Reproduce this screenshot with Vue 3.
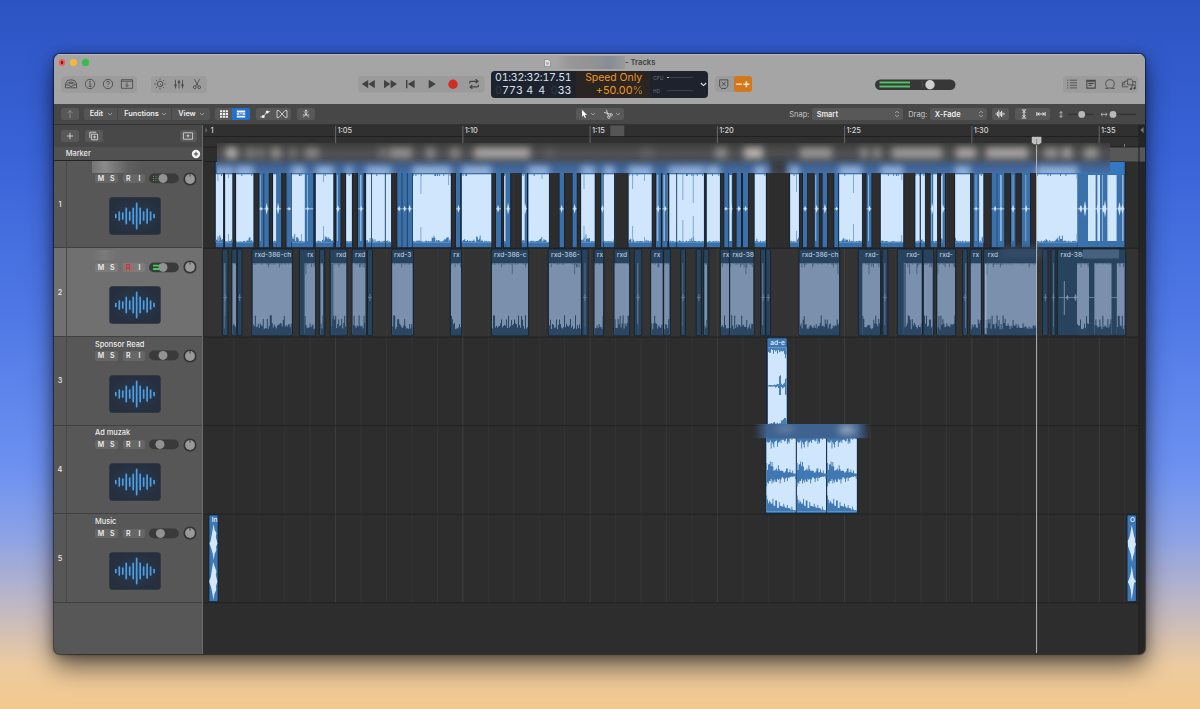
<script setup>
const rng = (seed) => {
  let s = Math.floor(seed * 7919) % 2147483647 || 1
  return () => ((s = (s * 16807) % 2147483647) / 2147483647)
}

// Jagged silhouette rising (dir -1) or hanging (dir 1) from a base line
const jag = (x, w, base, dir, env, seed, step = 1) => {
  const r = rng(seed + 3)
  r(); r()
  let d = `M${x} ${base}`
  for (let i = 0; i < w; i += step) {
    const h = env(i / w, r(), x + i) * dir
    const n = Math.min(w, i + step)
    d += `V${(base + h).toFixed(1)}H${(x + n).toFixed(1)}`
  }
  return d + `V${base}Z`
}

// Track 1: [start, end, kind, blip position]
const t1 = [
  [215.7, 223.2, 'w'], [225, 232.4, 'w'], [236, 253.5, 'w'], [259.3, 263.5, 'b', 261], [264.2, 268.8, 'b', 266.5],
  [273, 276.4, 'w'], [276.4, 281.2, 'b', 278], [286.5, 291, 'b', 289], [291.6, 305, 'w'], [305, 313.3, 'b', 307.5],
  [315.7, 333.4, 'w'], [336, 340.5, 'b', 337.8], [346, 352, 'w'], [358, 363.5, 'b', 361], [366, 371.3, 'w'],
  [371.8, 385, 'w'], [385.6, 391.2, 'w'], [397.3, 401.7, 'b', 399], [402.3, 406.9, 'b', 404.5], [407.5, 412.3, 'b', 409.5],
  [412.8, 450.9, 'w'], [456, 460.2, 'b', 458.3], [461.7, 491.4, 'w'], [496, 501, 'b', 498], [504, 505.7, 'w'],
  [505.7, 510.2, 'b', 508], [521.7, 524.9, 'w'], [524.9, 527, 'b', 525], [528.3, 549.1, 'w'], [559.6, 564, 'b', 561.5],
  [572.6, 576.8, 'b', 574.5], [581, 594.8, 'w'], [601, 603, 'b', 602.3], [603.6, 614.2, 'w'], [628.6, 651.8, 'w'],
  [656, 660.8, 'b', 658], [662.3, 667.3, 'b', 665], [669.2, 676.4, 'w'], [677, 704.1, 'w'], [706.7, 720.1, 'w'],
  [724.3, 728.4, 'b', 725.8], [729, 732.4, 'b', 731], [736.6, 741, 'b', 738.8], [743, 748, 'b', 745.5], [754.6, 766, 'w'],
  [790, 799.1, 'w'], [803, 807.1, 'b', 805], [814.6, 818.8, 'b', 816.5], [822.6, 827, 'b', 824.8], [834.3, 838.2, 'b', 836.5],
  [839, 862.1, 'w'], [866.6, 871.4, 'b', 869.4], [880.7, 903.3, 'w'], [915.3, 919.8, 'w'], [920.7, 925.1, 'w'],
  [930.6, 933, 'b', 932], [933, 937.2, 'w'], [941, 942.8, 'w'], [942.6, 945, 'b', 942.8], [955, 970.2, 'w'],
  [973.6, 978.8, 'b', 976], [979, 983.4, 'w'], [991.7, 996.8, 'b', 995], [997.2, 1004.3, 'b', 1001], [1011, 1015.4, 'b', 1013],
  [1021.8, 1030, 'b', 1026], [1036.7, 1077.5, 'w'], [1077.5, 1124.5, 'b', 1081],
]
const light1 = [
  [259.9, .8], [274, 1.5], [307, 1], [337, 1], [360, 1.6], [656.8, 1.6], [663.4, 1.6], [729.5, 2.2],
  [602.6, .8], [667, .6], [815.2, 1], [868, 1], [930.9, .8], [975.6, .8], [1000, 1.8], [1025.4, .8], [1012.6, .8],
  [1088, 7.6], [1097.4, 2.6], [1102, 1], [1107.4, 9.2], [1122, 1.6],
]
// Tall transients inside the long clips of track 1: [x, reach from top, reach from bottom]
const spikes1 = [
  [323, 8, 16], [420.5, 20, 15], [448, 11, 4], [583.6, 15, 16], [632.3, 15, 16], [644, 7, 5], [682.5, 26, 22], [692.8, 29, 26],
  [796.2, 18, 11], [853.2, 19, 18], [541.6, 5, 5], [228, 4, 8], [301, 2, 8], [217.5, 7, 6], [901.3, 6, 7], [1076.5, 5, 8],
]

// Track 2: [start, end, label, waveform start, waveform end, label x]
const t2 = [
  [222.3, 228, '', 223.8, 225.6], [231.7, 237, '', 232.5, 236], [237.3, 242, ''], [252, 292.5, 'rxd-386-ch', 252.8, 291.8, 254.8],
  [299.3, 315.8, 'rx', 304.6, 315, 307.2], [319.3, 324.8, '', 320.5, 323], [330, 347, 'rxd', 331.2, 346.2, 336.2], [352, 366.2, 'rxd', 352.6, 365.4, 355],
  [367.5, 372.4, ''], [391.6, 413.4, 'rxd-3', 392.2, 412.6, 394], [450.3, 461.8, 'rx', 451, 461, 453.3], [491.3, 528.8, 'rxd-386-c', 492, 528, 494],
  [548.2, 581.4, 'rxd-386-', 549, 580.8, 551], [581.8, 588, '', 584.5, 585.5], [594, 603.8, 'rx', 594.6, 603, 596.8], [614, 629.8, 'rxd', 614.6, 629, 616.8],
  [634.3, 641.8, '', 637, 638.4], [650.6, 663.2, 'rx', 651.2, 662.6, 654], [663.6, 670.4, '', 664.2, 669.4], [680.6, 685.5, '', 682.4, 683.2],
  [696.2, 701.4, ''], [703.6, 708.8, '', 704.4, 707], [720.2, 729.4, 'rx', 721, 729, 723], [729.6, 754.1, 'rxd-38', 730.2, 753.2, 732.4],
  [760.5, 765.6, '', 762, 763.4], [765.8, 770.5, ''], [799, 839.8, 'rxd-386-ch', 799.7, 839, 802], [858.3, 880.7, 'rxd-', 862.3, 880, 865.3],
  [882.2, 887.8, '', 884.2, 885.4], [897.3, 922.4, 'rxd-', 903.8, 921.6, 906.5], [923, 933.8, '', 924, 932.6], [936.6, 955.7, 'rxd-', 937.4, 955, 939.5],
  [962.6, 967.4, '', 965, 966.4], [970, 981.5, 'rx', 970.8, 980.8, 972.8], [983.6, 1037.3, 'rxd', 984.6, 1037, 987.8], [1042.6, 1048, ''],
  [1051, 1055.8, '', 1053, 1053.8], [1057.3, 1125.8, 'rxd-38(', 1077, 1089, 1060.5],
]
const extra2 = [[1094.4, 1111.5], [1116.8, 1124.5]]

const low2 = (t, r) => 6 + r * 8 + (r > .9 ? 6 : r > .78 ? 3 : 0)
const high2 = (t, r) => (r > .97 ? 11 : r > .88 ? 4 : r > .6 ? 1.2 : 0.3)
const swell = (x) => Math.max(0, Math.sin(x * .41) + Math.sin(x * .173 + 1)) / 2
const low1 = (t, r, x) => .3 + r * 1.2 + swell(x) * r * 7
const high1 = (t, r) => (r > .93 ? 2 : 0)

const whites = t1.filter((r) => r[2] === 'w')
const lows1 = whites.map((r) => jag(r[0], r[1] - r[0], 242.2, -1, low1, r[0], .9)).join('')
const highs1 = whites.map((r) => jag(r[0], r[1] - r[0], 174, 1, high1, r[0] + 5, .9)).join('')
const spikes = spikes1.map(([x, a, b]) => `M${x} 174h.8v${a}h-.8zM${x} 242h.8v${-b}h-.8z`).join('')
const blips = t1.filter((r) => r[3]).map((r) => {
  const h = 2 + (Math.floor(r[0] * 7) % 5)
  return `M${r[0]} 208.4H${r[1]}V209.2H${r[0]}ZM${r[3] - 1} 208.8L${r[3]} ${208.8 - h}L${r[3] + 1.4} 208.8L${r[3]} ${208.8 + h}Z`
}).join('')
const tailBlips = [1080.5, 1085, 1098, 1103.5, 1105, 1119.5, 1122.5].map((x, i) => {
  const h = 3 + ((i * 5) % 7)
  return `M${x - 1.4} 208.8L${x} ${208.8 - h}L${x + 1.4} 208.8L${x} ${208.8 + h}Z`
}).join('')
const bands2 = t2.filter((r) => r[3]).map((r) => [r[3], r[4]]).concat(extra2)
const lows2 = bands2.map((b) => jag(b[0], b[1] - b[0], 335.2, -1, low2, b[0], 1)).join('')
const highs2 = bands2.map((b) => jag(b[0], b[1] - b[0], 263.2, 1, high2, b[0] + 9, .9)).join('')

const adClips = [766.2, 796.7, 827]
const decay = (a, b) => (t, r) => b * (.6 + r * .8) + (a - b) * Math.pow(1 - t, 1.3) * (.5 + r * .9) + (r > .9 ? 2 : 0)
const adWaves = adClips.map((x) =>
  jag(x, 30, 436, 1, decay(9, 3), 41, .9) + jag(x, 30, 475, -1, decay(10, 1.3), 17, .9) +
  jag(x, 30, 475, 1, decay(9, 1.3), 25, .9) + jag(x, 30, 511.5, -1, decay(10, 1.4), 33, .9)).join('')
const adRead = jag(768, 18.6, 347.5, 1, (t, r) => 1.5 + r * 5 + (t > .85 ? 5 : 0), 12, 1) +
  jag(768, 18.6, 385.8, -1, (t, r) => .6 + r * 3 * t + (t > .58 && t < .68 ? 8 : 0) + (t > .9 ? 5 : 0), 8, 1) +
  jag(768, 18.6, 385.8, 1, (t, r) => .6 + r * 3 * t + (t > .58 && t < .68 ? 8 : 0) + (t > .9 ? 6 : 0), 9, 1) +
  jag(768, 18.6, 424.5, -1, (t, r) => .6 + r * 6 * t + (t > .7 ? 3 : 0), 14, 1)
const musicIn = 'M213.6 524L214.6 530L216.4 533L215.8 537L216.6 540L217.4 543.4L216 547L216.4 550L214.6 554L213.6 560L212.6 553L211.4 549L210 545L209.4 543.4L210.6 541L211.6 536L212.6 530ZM213.2 562L214.8 567L216.4 571L215.8 575L217.4 581.4L216 586L216.2 590L214.4 594L213.4 600L212.4 593L211 587L209.6 583L209.2 581L210.8 577L212 569Z'
const musicOut = 'M1131.8 525L1133 531L1134 536L1135 539L1134.8 542L1136 544L1134.6 548L1134.4 552L1133 557L1132 562L1131 555L1129.4 550L1128 546L1127.8 541L1129.6 537L1130.8 531ZM1131.8 566L1132.8 573L1133.6 578L1136 581.6L1134 583L1133 591L1131.6 600L1130.8 590L1129.4 585L1127.8 582L1129.6 578L1130.6 574Z'

const rulers = [[335.6, '1:05'], [462.9, '1:10'], [590.1, '1:15'], [717.4, '1:20'], [844.6, '1:25'], [971.9, '1:30'], [1099.2, '1:35']]
const grid = Array.from({ length: 36 }, (_, i) => 233.8 + i * 25.453)
const dividers = [248.3, 337, 425.6, 514.2, 602.8]

// Obscured marker names: [start, width, strength]
const smudges = [
  [226, 11, .9], [246, 9, .4], [258, 6, .4], [271, 10, .6], [290, 6, .4], [305, 14, .5], [378, 10, .3], [390, 22, .6], [426, 9, .55],
  [450, 10, .5], [474, 56, .8], [545, 10, .12], [640, 14, .15], [715, 12, .55], [744, 19, .95], [800, 32, .65], [860, 8, .55], [873, 8, .55],
  [892, 50, .7], [956, 20, .8], [986, 42, .8], [1044, 14, .6], [1062, 10, .75], [1084, 14, .65],
]
const blueSmudges = whites.filter((r) => r[1] - r[0] > 5)

const tracks = [
  { n: 1, name: '', knob: 163, dots: true },
  { n: 2, name: '', knob: 163, sel: true },
  { n: 3, name: 'Sponsor Read', knob: 163 },
  { n: 4, name: 'Ad muzak', knob: 160 },
  { n: 5, name: 'Music', knob: 160.4 },
]
const bars = [1.5, 4, 3, 7.6, 4, 7.6, 12.6, 7.6, 4, 7, 4, 1.5]
</script>

<template>
  <div class="desktop">
    <div class="window">
      <header class="titlebar">
        <div class="title-row">
          <i class="light red"></i><i class="light yellow"></i><i class="light green"></i>
          <svg class="doc" viewBox="0 0 7 8"><path d="M.5.5h4l2 2v5h-6z" fill="#ddd" stroke="#777" stroke-width=".6" /><circle cx="3.4" cy="4.4" r="1.4" fill="#aaa" /></svg>
          <span class="hidden-name"></span>
          <span class="title">- Tracks</span>
        </div>
        <div class="control-row">
          <div class="group g-library">
            <svg viewBox="0 0 16 12"><path d="M2.4 6 4.2 2.6Q8 .9 11.8 2.6L13.6 6v3.8H2.4ZM2.4 6.8h3q.4 1.6 2.6 1.6t2.6-1.6h3M4.6 5.2Q8 2.6 11.4 5.2M6 6Q8 4.4 10 6" /></svg>
            <svg viewBox="0 0 16 12"><circle cx="8" cy="6" r="4.7" /><path d="M7 5.2h1.2v3.1M6.8 8.4h2.8" /><circle cx="8" cy="3.5" r=".4" /></svg>
            <svg viewBox="0 0 16 12"><circle cx="8" cy="6" r="4.7" /><path d="M6.5 4.8q0-1.5 1.5-1.5t1.5 1.3q0 .9-1 1.3-.5.3-.5 1M8 8.2v.7" /></svg>
            <svg viewBox="0 0 16 12"><path d="M2.4 1.7h11.2v8.6H2.4zM2.4 3.2h11.2M8 4.4v4.2M6.4 7 8 8.6 9.6 7" /></svg>
          </div>
          <div class="group g-edit">
            <svg viewBox="0 0 16 12"><circle cx="8" cy="6" r="2.8" /><path d="m8 6 1.6 1.6M8 .4v1.4M8 10.2v1.4M2.4 6h1.4M12.2 6h1.4M4 2l1 1M12 2l-1 1M4 10l1-1M12 10l-1-1" /></svg>
            <svg viewBox="0 0 16 12"><path d="M4.5 1.8v8.6M8 1.8v8.6M11.5 1.8v8.6" /><path d="M4.5 6.2v2M8 3.2v2M11.5 6.2v2" stroke-width="2.2" /></svg>
            <svg viewBox="0 0 16 12"><path d="M5.2 1.2 9.4 8M10.8 1.2 6.6 8" /><circle cx="5.8" cy="9.2" r="1.4" /><circle cx="10.2" cy="9.2" r="1.4" /></svg>
          </div>
          <svg class="transport" viewBox="358 76 127 17">
            <rect x="358" y="76" width="126.5" height="16.5" rx="3" fill="#9b9b9b" />
            <g fill="#414141">
              <path d="M368.2 80v8.2l-6.4-4.1zM374.8 80v8.2l-6.4-4.1zM384 80v8.2l6.4-4.1zM390.6 80v8.2l6.4-4.1zM406 80h1.4v8.2H406zM414.6 80v8.2l-6.8-4.1zM428.7 79.7v8.8l7.2-4.4z" />
              <circle cx="453" cy="84.2" r="4.7" fill="#d12d24" />
              <path d="M469.6 83.4v-.7q0-1.4 1.4-1.4h6M475.6 79.3l2.3 2-2.3 2M478.4 84.8v.7q0 1.4-1.4 1.4h-6M472.4 84.9l-2.3 2 2.3 2" fill="none" stroke="#414141" stroke-width="1.2" />
            </g>
          </svg>
          <div class="lcd">
            <div class="lcd-time"><b>01:32:32:17.51</b><b class="beats"><s>0</s><span class="b1">773</span><span class="b2">4</span><span class="b3">4</span><s>0</s><span>33</span></b></div>
            <div class="lcd-speed"><b>Speed Only</b><b>+50.00<em>%</em></b></div>
            <div class="lcd-load"><p><span>CPU</span><i class="hot"></i></p><p><span>HD</span><i></i></p></div>
            <svg viewBox="0 0 7 5"><path d="M.8 1l2.7 2.6L6.2 1" fill="none" stroke="#dfe5f0" stroke-width="1.1" /></svg>
          </div>
          <div class="modes">
            <svg viewBox="0 0 18 16"><path d="M4.6 3.6h8.2v6.3L11 12.2H6.4L4.6 9.9zM6.8 5.6l3.8 4M10.6 5.6l-3.8 4" fill="none" stroke="#484848" stroke-width=".9" /></svg>
            <svg class="orange" viewBox="0 0 18 16"><path d="M2.4 8h5.4M9.4 8h6M12.4 5v6" fill="none" stroke="#ffe6c0" stroke-width="1.5" /></svg>
          </div>
          <svg class="master" viewBox="875 79.5 81 12">
            <rect x="875" y="80" width="80.5" height="10.6" rx="5.3" fill="#373737" />
            <path d="M879.5 82.1h30.5v1.9h-30.5zM879.5 86h30.5v2h-30.5z" fill="#55c266" />
            <path d="M922.4 82v6.5" stroke="#777" stroke-width=".7" stroke-dasharray="1 1" />
            <circle cx="930" cy="85.3" r="4.7" fill="#cfcfcf" />
          </svg>
          <div class="group g-views">
            <svg viewBox="0 0 16 12"><path d="M3 2.2h1.3M3 4.8h1.3M3 7.3h1.3M3 9.9h1.3M5.8 2.2H13M5.8 4.8H13M5.8 7.3H13M5.8 9.9H13" /></svg>
            <svg viewBox="0 0 16 12"><path d="M3.8 2.2h8.4v7.9H3.8zM3.8 3.3h8.4M5.4 5.4h5.2M5.4 7.3h3.4" stroke-width="1.1" /></svg>
            <svg viewBox="0 0 16 12"><path d="M3.2 10.4h2.6Q3.7 8.4 3.7 5.7 3.7 1.7 8 1.7t4.3 4q0 2.7-2.1 4.7h2.6M5.8 10.4q2.2-1.2 4.4 0" /></svg>
            <svg viewBox="0 0 16 12"><path d="M7.2 8.8H1.4V4.4h3M3.4 4.4 4.2 3h2M6.6 6.8V1.2h3.6l1.6 1.8v3.8zM1.4 6.3h3M10.8 11V7.5l3.4-.8v3.5" /><circle cx="10" cy="11" r=".8" fill="#444" /><circle cx="13.5" cy="10.3" r=".8" fill="#444" /><path d="M12.2 3.6h2.4v2" /></svg>
          </div>
        </div>
      </header>

      <div class="menubar">
        <div class="btn up dim"><svg viewBox="0 0 10 10"><path d="M5 9V1.5M2.5 4 5 1.5 7.5 4" /></svg></div>
        <div class="menus">
          <span class="m-edit">Edit<svg class="chev" viewBox="0 0 6 4"><path d="M1 1l2 2 2-2" /></svg></span>
          <span class="m-func">Functions<svg class="chev" viewBox="0 0 6 4"><path d="M1 1l2 2 2-2" /></svg></span>
          <span class="m-view">View<svg class="chev" viewBox="0 0 6 4"><path d="M1 1l2 2 2-2" /></svg></span>
        </div>
        <div class="toggle">
          <div><svg viewBox="0 0 10 10"><path fill="#eee" stroke="none" d="M1 1.2h2.2v2H1zM3.9 1.2h2.2v2H3.9zM6.8 1.2H9v2H6.8zM1 4h2.2v2H1zM3.9 4h2.2v2H3.9zM6.8 4H9v2H6.8zM1 6.8h2.2v2H1zM3.9 6.8h2.2v2H3.9zM6.8 6.8H9v2H6.8z" /></svg></div>
          <div class="active"><svg viewBox="0 0 10 10"><path fill="#fff" stroke="none" d="M.8 1.6h8.4v1.8H.8zM.8 4.2h2.4v1.6H.8zM6.6 4.2h2.6v1.6H6.6zM.8 6.7h8.4v1.8H.8z" /><path d="M3.6 5.4 5 4.4l1.2.9" stroke="#fff" /></svg></div>
        </div>
        <div class="pair p-auto">
          <svg viewBox="0 0 12 10"><path d="M1.2 8h3L8 2.6h3" /><circle cx="4.2" cy="7.4" r="1.5" fill="#eee" stroke="none" /><circle cx="8.2" cy="3" r="1.5" fill="#eee" stroke="none" /></svg>
          <svg viewBox="0 0 12 10"><path d="M1 1.6v6.8l2 0 6-6.8h2v6.8H9L3 1.6z" /></svg>
        </div>
        <div class="btn catch"><svg viewBox="0 0 10 10"><path d="M5 3.8v3M5 5 2.2 8.4M5 5l2.8 3.4M3 2.4 5 4.6l2-2.2M1.8 6.2l1.5-.8M8.2 6.2l-1.5-.8" /><circle cx="5" cy="1.7" r=".9" fill="#eee" stroke="none" /></svg></div>
        <div class="tools">
          <svg viewBox="0 0 8 10"><path d="M2 .8v7l1.7-1.5 1.2 2.8 1.1-.5-1.2-2.7H7z" fill="#fff" stroke="none" /></svg>
          <svg class="chev" viewBox="0 0 6 4"><path d="M1 1l2 2 2-2" /></svg>
          <svg class="cut" viewBox="0 0 10 10"><path d="M1 3.4l6.6 1.8M3.4.8 5.4 7" /><circle cx="8.2" cy="5.8" r="1.2" /><circle cx="5.8" cy="8.2" r="1.2" /></svg>
          <svg class="chev" viewBox="0 0 6 4"><path d="M1 1l2 2 2-2" /></svg>
        </div>
        <span class="lbl l-snap">Snap:</span>
        <div class="select s-snap">Smart<svg viewBox="0 0 6 8"><path d="M1.2 3 3 1.2 4.8 3M1.2 5 3 6.8 4.8 5" /></svg></div>
        <span class="lbl l-drag">Drag:</span>
        <div class="select s-drag">X-Fade<svg viewBox="0 0 6 8"><path d="M1.2 3 3 1.2 4.8 3M1.2 5 3 6.8 4.8 5" /></svg></div>
        <div class="btn wavebtn"><svg viewBox="0 0 10 10"><path d="M1 4.4v1.2M2.4 3v4M3.8 1.4v7.2M5.2 3v4M6.6 2v6M8 3.6v2.8M9.3 4.5v1" stroke-width="1" /></svg></div>
        <div class="pair p-fit">
          <svg viewBox="0 0 12 10"><path d="M3.8 1h4.4M3.8 9h4.4M6 2v6M4.6 3.8 6 2.2l1.4 1.6M4.6 6.2 6 7.8l1.4-1.6" stroke-width="1" /></svg>
          <svg viewBox="0 0 12 10"><path d="M1.9 3v4M10.1 3v4M2.6 5h6.8M4.4 3.6 2.8 5l1.6 1.4M7.6 3.6 9.2 5 7.6 6.4" stroke-width="1" /></svg>
        </div>
        <svg class="zoomers" viewBox="1056 108 84 13">
          <path d="M1061 111.6v5.8M1059.4 113.2l1.6-1.7 1.6 1.7M1059.4 115.8l1.6 1.7 1.6-1.7M1101 114.4h6M1102.5 112.9l-1.6 1.5 1.6 1.5M1105.5 112.9l1.6 1.5-1.6 1.5" fill="none" stroke="#c4c4c4" stroke-width=".8" />
          <path d="M1068 114.4h26M1110 114.4h26" stroke="#333" stroke-width="1.3" />
          <circle cx="1081.7" cy="114.4" r="3.4" fill="#b9b9b9" /><circle cx="1113" cy="114.4" r="3.4" fill="#b9b9b9" />
        </svg>
      </div>

      <div class="body">
        <aside class="heads">
          <div class="head-tools">
            <div class="btn"><svg viewBox="0 0 10 10"><path d="M5 1.8v6.4M1.8 5h6.4" /></svg></div>
            <div class="btn dup"><svg viewBox="0 0 12 10"><path d="M3.6 3.2h6v5.6h-6zM2.2 6.8H1.8V1.2h6v.6M6.6 4.4v3.2M5 6h3.2" /></svg></div>
            <div class="btn cfg"><svg viewBox="0 0 12 10"><path d="M1.4 1.8h9.2v6.4H1.4zM6 3.4v3.2M4.6 4.8h2.8M3.2 5h.4M8.4 5h.4" /></svg></div>
          </div>
          <div class="marker">Marker<svg viewBox="0 0 10 10"><circle cx="5" cy="5" r="4.2" fill="#f4f4f4" /><path d="M5 2.8v4.4M2.8 5h4.4" stroke="#444" stroke-width="1" /></svg></div>
          <div v-for="t in tracks" :key="t.n" class="track" :class="{ sel: t.sel, first: t.n === 1 }">
            <div class="num">{{ t.n }}</div>
            <div class="strip">
              <div v-if="t.name" class="name">{{ t.name }}</div>
              <div v-else class="name redacted" :class="{ faint: t.sel }"></div>
              <div class="controls">
                <div class="mini"><span>M</span><span>S</span></div>
                <div class="mini"><span :class="{ rec: t.sel }">R</span><span>I</span></div>
                <svg viewBox="149 173 48 11">
                  <rect x="149" y="173.5" width="29.8" height="9.8" rx="4.9" fill="#3a3a3a" />
                  <path v-if="t.dots" d="M153 176.4h5M153 178.4h5M153 180.4h5" stroke="#5aa063" stroke-width=".9" stroke-dasharray="1 1.4" />
                  <path v-if="t.sel" d="M153 176.7h8M153 180h8" stroke="#35d25a" stroke-width="1.8" />
                  <circle :cx="t.knob" cy="178.4" r="4.5" fill="#929292" />
                </svg>
                <svg class="pan" viewBox="0 0 14 14"><circle cx="7" cy="7" r="6.6" fill="#343434" /><circle cx="7" cy="7" r="4.9" fill="#999" /><path d="M7 2v2.6" stroke="#333" stroke-width=".9" /></svg>
              </div>
              <svg class="art" viewBox="0 0 52 38">
                <defs><radialGradient :id="'a' + t.n"><stop offset="0" stop-color="#283b56" /><stop offset="1" stop-color="#262f3d" /></radialGradient></defs>
                <rect x=".3" y=".3" width="51.4" height="37.4" rx="3" :fill="`url(#a${t.n})`" />
                <g stroke="#4d9fe2" stroke-width="1.7" stroke-linecap="round"><path v-for="(h, i) in bars" :key="i" :d="`M${6.8 + i * 3.48} ${19 - h}v${h * 2}`" /></g>
              </svg>
            </div>
          </div>
        </aside>

        <svg class="canvas" viewBox="204 125 941 529">
          <defs>
            <filter id="soft" x="-10%" y="-60%" width="120%" height="220%"><feGaussianBlur stdDeviation="3.4" /></filter>
            <filter id="softer" x="-30%" y="-100%" width="160%" height="300%"><feGaussianBlur stdDeviation="3.8" /></filter>
            <filter id="fade" x="-20%" y="-100%" width="140%" height="300%"><feGaussianBlur stdDeviation="5 2.4" /></filter>
            <linearGradient id="veil" x1="0" y1="0" x2="0" y2="1"><stop offset="0" stop-color="#3c3c3c" /><stop offset=".3" stop-color="#505050" /><stop offset=".5" stop-color="#4a4e55" /><stop offset=".74" stop-color="#3f6190" /><stop offset="1" stop-color="#466fa6" /></linearGradient>
            <clipPath id="strip"><rect x="217" y="143" width="893" height="30" /></clipPath>
            <clipPath id="adstrip"><rect x="750" y="424" width="124" height="14.2" /></clipPath>
          </defs>
          <rect x="204" y="125" width="941" height="529" fill="#2d2d2d" />
          <rect x="204" y="125" width="941" height="22" fill="#303030" />
          <rect x="204" y="248.5" width="935" height="88.5" fill="#333" />
          <path v-for="g in grid" :key="g" :d="`M${g} 162V602.5`" stroke="#3a3a3a" stroke-width=".6" />
          <path v-for="r in rulers" :key="r[1]" :d="`M${r[0]} 162V602.5`" stroke="#404040" stroke-width=".8" />
          <path v-for="d in dividers" :key="d" :d="`M204 ${d}H1139`" stroke="#202020" stroke-width=".9" />
          <path d="M204 136.5H1139M204 147H1139M204 161.5H217" stroke="#1e1e1e" stroke-width=".9" />
          <rect x="610.3" y="125.5" width="14" height="10.6" fill="#555" />
          <g class="ruler-text">
            <text x="210.5" y="132.6">1</text>
            <text v-for="r in rulers" :key="r[1]" :x="r[0] + 1.8" y="132.6">{{ r[1] }}</text>
          </g>
          <path d="M205.3 127v6l2-3z" fill="#666" />
          <path v-for="r in rulers" :key="r[0]" :d="`M${r[0]} 126V147`" stroke="#777" stroke-width=".8" />
          <path d="M1124.5 144v3" stroke="#999" stroke-width=".7" />
          <rect x="1100" y="147.5" width="45" height="14" fill="#575757" />

          <rect v-for="r in t1" :key="r[0]" :x="r[0] - .9" y="161.8" :width="r[1] - r[0] + 1.8" height="86" fill="#18222e" />
          <rect v-for="r in t1" :key="r[0]" :x="r[0]" y="162" :width="r[1] - r[0]" height="85.2" fill="#3b71aa" />
          <g fill="#d0e6fc">
            <rect v-for="r in whites" :key="r[0]" :x="r[0] + .2" y="174.3" :width="r[1] - r[0] - .4" height="68" />
            <rect v-for="l in light1" :key="l[0]" :x="l[0]" y="175" :width="l[1]" height="66" :opacity="l[1] > 2 ? 1 : .55" />
            <path :d="blips + tailBlips" />
          </g>
          <path :d="lows1 + highs1" fill="#3f76ad" />
          <path :d="spikes" fill="#6c9ac8" />
          <rect x="1036.8" y="162" width="87.7" height="12" fill="#3477c2" />

          <g v-for="r in t2" :key="r[0]">
            <rect :x="r[0]" y="249" :width="r[1] - r[0]" height="86.8" rx="1.6" fill="#28435e" stroke="#15212d" stroke-width=".9" />
            <rect v-if="r[3]" :x="r[3]" y="263.2" :width="r[4] - r[3]" height="71" fill="#7a90ad" :opacity="r[4] - r[3] < 2 ? .6 : 1" />
            <path v-if="!r[3] || r[4] - r[3] < 2" :d="`M${(r[0] + r[1]) / 2 - 1.8} 297.4h3.6M${(r[0] + r[1]) / 2} 294v7`" stroke="#6f87a4" stroke-width=".8" />
          </g>
          <rect v-for="b in extra2" :key="b[0]" :x="b[0]" y="263.2" :width="b[1] - b[0]" height="71" fill="#7a90ad" />
          <path d="M1063.8 281h1v34h-1zM1059 297.1h64v.6h-64zM1067.4 294.5l1.4 3-1.4 3-1.4-3zM1075.6 293.5l1.2 4-1.2 4-1.6-4z" fill="#7a90ad" />
          <path d="M331 264h2.4v70H331zM904 264h2v70h-2z" fill="#48627f" />
          <path :d="lows2" fill="#2a4663" />
          <path :d="highs2" fill="#45607f" />
          <path d="M985.9 264v70" stroke="#a9bdd2" stroke-width="1" />
          <g class="clip-text"><text v-for="r in t2.filter((r) => r[2])" :key="r[0]" :x="r[5]" y="256.5">{{ r[2] }}</text></g>
          <rect x="1001" y="247.5" width="40" height="11" fill="#344c66" filter="url(#softer)" />
          <rect x="1083" y="249.5" width="36" height="9" fill="#46617e" />

          <rect x="767" y="337.8" width="20.3" height="87" rx="1.6" fill="#3d77b5" stroke="#14202c" stroke-width=".8" />
          <rect x="768" y="347.5" width="18.6" height="77" fill="#d0e6fc" />
          <path :d="adRead" fill="#477eb6" />
          <text class="clip-text bright" x="770.2" y="345.2">ad-e</text>

          <g v-for="x in adClips" :key="x">
            <rect :x="x - .4" y="430" width="30.6" height="83.4" rx="1" fill="#3672ae" stroke="#14202c" stroke-width=".9" />
            <rect :x="x + .2" y="434" width="29.6" height="77.5" fill="#d0e6fc" />
          </g>
          <path :d="adWaves" fill="#3f78b2" />
          <g clip-path="url(#adstrip)">
            <rect x="766" y="424" width="92" height="14.2" fill="#3f6190" opacity=".8" />
            <rect x="761" y="418" width="103" height="26" fill="#3f628f" filter="url(#fade)" />
            <ellipse cx="785" cy="429" rx="10" ry="4" fill="#6480a6" filter="url(#softer)" />
            <ellipse cx="847" cy="430" rx="9" ry="5" fill="#8fa2be" filter="url(#softer)" />
          </g>

          <g stroke="#12202d" stroke-width=".9" fill="#3d77b5">
            <rect x="208.9" y="514.9" width="9.2" height="86.8" rx="1.4" /><rect x="1127" y="514.9" width="9.4" height="86.8" rx="1.4" />
          </g>
          <path :d="musicIn + musicOut" fill="#d3e7fb" />
          <text class="clip-text bright" x="211.8" y="522.4">In</text>
          <text class="clip-text bright" x="1130" y="522.4">O</text>

          <g clip-path="url(#strip)">
            <rect x="215" y="143" width="897" height="31" fill="url(#veil)" />
            <g filter="url(#soft)">
              <rect x="770" y="158" width="17" height="18" fill="#3a3c40" />
              <rect v-for="b in blueSmudges" :key="b[0]" :x="b[0]" y="166" :width="b[1] - b[0]" height="14" fill="#9dbae0" opacity=".85" />
            </g>
            <g filter="url(#softer)">
              <rect v-for="s in smudges" :key="s[0]" :x="s[0]" y="147.5" :width="s[1]" height="11" fill="#bcb8b6" :opacity="s[2]" />
            </g>
          </g>

          <path d="M1139 125V654" stroke="#1b1b1b" stroke-width="1" />
          <path d="M1139.5 125h5.5v22h-5.5zM1139.5 162h5.5V654h-5.5z" fill="#252525" />
          <path d="M1143.6 127v6l-3.2-3z" fill="#777" />
          <path d="M1036.6 145V653" stroke="#b6b6b6" stroke-width="1" />
          <path d="M1031.8 136.8h9.6v5.4l-1.8 2h-6l-1.8-2z" fill="#c0c0c0" />
          <path d="M1036.6 139v5" stroke="#777" stroke-width=".7" />
        </svg>
      </div>
    </div>
  </div>
</template>

<style>
body { margin: 0; overflow: hidden; }
</style>

<style scoped>
.desktop {
  width: 1200px; height: 709px; box-sizing: border-box; padding: 54px 55px 55px 54px; overflow: hidden;
  font-family: Inter, "Liberation Sans", sans-serif; font-size: 7.5px; color: #ececec;
  background: linear-gradient(180deg, #2c54c2 0%, #3a63d8 22%, #5079e6 45%, #6d91f2 66%, #8ea3e4 76%, #c3b9c2 86%, #eccb9f 94%, #f3ca8e 100%);
}
svg { display: block; flex: none; }
.window {
  height: 600px; display: flex; flex-direction: column; border-radius: 6px; overflow: hidden; background: #2d2d2d;
  box-shadow: 0 0 1px 0.5px rgba(0, 0, 0, .5), 0 13px 26px rgba(0, 0, 0, .55), 0 2px 12px rgba(0, 0, 0, .3);
}
.titlebar { height: 50px; flex: none; background: #a5a5a5; box-shadow: inset 0 1px 0 #b9b9b9; }
.title-row { display: flex; align-items: center; height: 17px; padding-left: 4.8px; }
.light { width: 6.6px; height: 6.6px; border-radius: 50%; margin-right: 5px; flex: none; }
.light.red { background: radial-gradient(circle, #8a1d18 0 1.2px, #ee5a52 1.6px); }
.light.yellow { background: #f6b63c; }
.light.green { background: #31bf45; }
.doc { width: 7px; height: 8px; margin-left: 450px; }
.hidden-name { width: 69px; height: 13px; margin-left: 5px; background: linear-gradient(90deg, #a5a5a5, #979797 20%, #939393 50%, #878d96 78%, #9a9a9a); }
.title { font-weight: 600; color: #404040; margin-left: .5px; font-size: 7.6px; }
.control-row { display: flex; align-items: center; height: 26px; padding-left: 7.3px; }
.group { display: flex; align-items: center; height: 17px; border-radius: 4px; background: #9c9c9c; flex: none; box-sizing: border-box; }
.group svg { width: 16px; height: 12px; fill: none; stroke: #484848; stroke-width: .85; }
.g-library { width: 75.4px; padding-left: 1.6px; gap: 2.7px; }
.g-edit { width: 56px; margin-left: 14px; padding-left: 1.2px; gap: 2.8px; }
.transport { width: 127px; height: 17px; margin-left: 151.3px; }
.lcd { display: flex; align-items: center; width: 216.5px; height: 27px; margin-left: 6.5px; border-radius: 4px; background: #1d222c; flex: none; overflow: hidden; box-sizing: border-box; padding-left: 3.6px; }
.lcd b { font-weight: 400; font-size: 10.7px; line-height: 13px; display: block; white-space: nowrap; }
.lcd-time { width: 81px; color: #d5e0f2; flex: none; font-variant-numeric: tabular-nums; }
.lcd-time b:first-child { letter-spacing: -.32px; }
.lcd-time .beats { display: flex; }
.beats s { color: #303846; text-decoration: none; }
.beats .b1 { width: 24.2px; }
.beats .b2 { width: 12px; }
.beats .b3 { width: 12.5px; }
.lcd-speed { width: 74px; height: 27px; background: #2a2522; color: #ef981f; flex: none; text-align: right; box-sizing: border-box; padding: .5px 7px 0 0; }
.lcd-speed b { font-size: 10.4px; }
.lcd-speed b:first-child { padding-right: 1px; }
.lcd-speed b:last-child { font-size: 10.8px; }
.lcd-speed em { font-style: normal; opacity: .75; }
.lcd-load { width: 44px; margin-left: 3px; }
.lcd-load p { margin: 0; height: 13px; display: flex; align-items: center; font-size: 4.8px; color: #6c727d; }
.lcd-load span { width: 14px; }
.lcd-load i { width: 26px; height: 1px; background: #3a404c; }
.lcd-load i.hot { background: linear-gradient(90deg, #b8bec8 0 2px, #3a404c 2px); }
.lcd > svg { width: 7px; height: 5px; margin-left: 3px; }
.modes { display: flex; width: 37.5px; height: 16.5px; margin-left: 7px; border-radius: 4px; background: #9b9b9b; flex: none; }
.modes svg { width: 18px; height: 16.5px; }
.modes .orange { background: #d4761b; border-radius: 3px; margin-left: .6px; }
.master { width: 81px; height: 12px; margin-left: 122.4px; margin-top: 1px; }
.g-views { width: 75px; margin-left: 107px; padding-left: .8px; gap: 3px; }

.menubar { height: 21px; flex: none; display: flex; align-items: center; background: #474747; border-bottom: .5px solid #333; box-sizing: border-box; padding-left: 7.3px; }
.menubar svg, .head-tools svg { fill: none; stroke: #e6e6e6; stroke-width: .8; width: 10px; height: 10px; }
.menubar svg.chev { width: 6px; height: 4px; stroke: #b0b0b0; }
.btn { width: 17.5px; height: 11.5px; border-radius: 2.5px; background: #585858; display: flex; align-items: center; justify-content: center; flex: none; }
.dim svg { opacity: .45; }
.menus { display: flex; width: 126px; height: 11.5px; margin-left: 5.2px; background: #545454; border-radius: 2.5px; flex: none; font-weight: 600; font-size: 7.3px; line-height: 11.5px; }
.menus span { display: flex; align-items: center; justify-content: space-between; box-sizing: border-box; padding: 0 4.5px 0 5.7px; border-right: .7px solid #474747; }
.m-edit { width: 34.5px; }
.m-func { width: 54px; }
.m-view { width: 37.5px; }
.menus .m-view { border: 0; }
.toggle { display: flex; width: 35px; height: 11.5px; margin-left: 4.8px; background: #585858; border-radius: 2.5px; overflow: hidden; flex: none; }
.toggle div { width: 50%; display: flex; align-items: center; justify-content: center; }
.toggle .active { background: #2171cd; }
.pair { display: flex; align-items: center; justify-content: space-around; height: 11.5px; background: #585858; border-radius: 2.5px; flex: none; }
.menubar .pair svg { width: 12px; height: 10px; }
.p-auto { width: 35px; margin-left: 6.2px; }
.catch { margin-left: 6.3px; }
.tools { display: flex; align-items: center; width: 48px; height: 11.5px; background: #585858; border-radius: 2.5px; margin-left: 261px; flex: none; box-sizing: border-box; padding-left: 4.2px; gap: 2px; }
.menubar .tools svg:first-child { width: 8px; }
.menubar .tools .cut { margin-left: 5.5px; }
.lbl { color: #c6c6c6; font-size: 7.5px; flex: none; }
.l-snap { margin-left: 165.5px; width: 22.4px; }
.select { display: flex; align-items: center; justify-content: space-between; height: 11.5px; background: #585858; border-radius: 2.5px; font-weight: 600; font-size: 7.4px; flex: none; box-sizing: border-box; padding: 0 2.5px 0 5px; }
.menubar .select svg { width: 6px; height: 8px; stroke: #bbb; }
.s-snap { width: 91px; }
.l-drag { margin-left: 5.5px; width: 21.5px; }
.s-drag { width: 57px; }
.wavebtn { margin-left: 5px; width: 17px; }
.p-fit { width: 35.5px; margin-left: 6px; }
.menubar .zoomers { width: 84px; height: 13px; margin-left: 6px; stroke: none; }

.body { flex: 1; display: flex; min-height: 0; }
.heads { width: 149.4px; flex: none; background: #575757; border-right: .6px solid #6a6a6a; box-sizing: border-box; }
.canvas { width: 941px; height: 529px; margin-left: .6px; }
.head-tools { display: flex; align-items: center; height: 22px; background: #484848; padding-left: 7.3px; }
.dup { margin-left: 6.3px; }
.cfg { margin-left: 77px; }
.head-tools .dup svg, .head-tools .cfg svg { width: 12px; }
.marker { display: flex; align-items: center; justify-content: space-between; height: 14px; padding: .8px 1px 0 11.7px; background: #515151; border-bottom: 1px solid #232323; font-weight: 500; font-size: 7.4px; box-sizing: border-box; }
.marker svg { width: 10px; height: 10px; }
.track { display: flex; height: 88.65px; box-sizing: border-box; border-bottom: .8px solid #404040; }
.track.first { height: 87.3px; }
.track.sel { background: #707070; }
.num { width: 13px; flex: none; box-sizing: border-box; border-right: .7px solid #454545; display: flex; align-items: center; justify-content: center; font-size: 7.3px; font-weight: 500; }
.strip { flex: 1; display: flex; flex-direction: column; justify-content: flex-end; padding-bottom: 12px; }
.name { height: 9px; line-height: 9px; margin: 0 0 .4px 28px; font-size: 7.4px; font-weight: 500; }
.redacted { width: 52px; height: 13px; margin: 0 0 -1px 25px; background: linear-gradient(90deg, #757575, #8a8a8a 25%, #777 45%, #606060 70%, #575757); }
.redacted.faint { width: 26px; height: 10px; margin-bottom: 0; background: linear-gradient(90deg, #707070, #7b7b7b 50%, #707070); }
.controls { display: flex; align-items: center; height: 14px; margin-left: 28.4px; }
.mini { display: flex; width: 22.6px; height: 9.4px; margin-right: 4.6px; background: #666; border-radius: 2px; flex: none; }
.mini + .mini { margin-right: 3.8px; }
.mini span { width: 50%; text-align: center; font-size: 7px; font-weight: 600; line-height: 9.6px; }
.sel .mini { background: #7c7c7c; }
.mini .rec { color: #c23230; background: #8d7473; }
.controls svg { width: 48px; height: 11px; }
.controls .pan { width: 14px; height: 14px; margin-left: -14.2px; }
.art { width: 52px; height: 38px; margin: 11.6px 0 0 42px; }
.ruler-text { font-size: 7.4px; fill: #d8d8d8; font-weight: 500; }
.clip-text { font-size: 6.6px; fill: #b9c8d9; font-weight: 500; }
.clip-text.bright { fill: #e8f2fd; }
</style>
